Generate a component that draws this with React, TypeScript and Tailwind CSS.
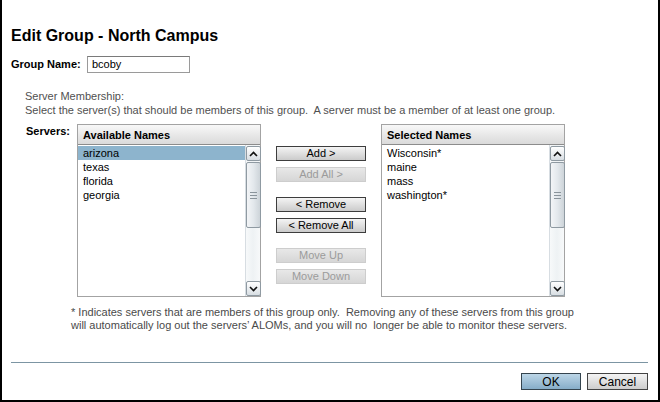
import React from "react";

const font = { fontFamily: '"Liberation Sans", Arial, sans-serif' };

function Chevron({ up }: { up: boolean }) {
  return (
    <svg width="9" height="6" viewBox="0 0 9 6" className="block">
      <polyline
        points={up ? "1,5 4.5,1.5 8,5" : "1,1 4.5,4.5 8,1"}
        fill="none"
        stroke="#111"
        strokeWidth="1.6"
      />
    </svg>
  );
}

function ScrollBar() {
  return (
    <div className="w-[15px] h-full flex flex-col border-l border-[#d7dde2] bg-gradient-to-r from-[#f7f9fa] via-[#eef2f4] to-[#f7f9fa]">
      <div className="mt-[1px] h-[15px] w-[15px] border border-[#8f9aa2] rounded-[2px] bg-gradient-to-b from-[#ffffff] to-[#d8dee3] flex items-center justify-center">
        <Chevron up />
      </div>
      <div className="mt-[1px] h-[66px] w-[15px] border border-[#8f9aa2] rounded-[2px] bg-gradient-to-r from-[#f3f5f7] via-[#e3e8ec] to-[#cdd4d9] flex flex-col items-center justify-center gap-[2px]">
        <div className="w-[7px] h-px bg-[#8a949b]" />
        <div className="w-[7px] h-px bg-[#8a949b]" />
        <div className="w-[7px] h-px bg-[#8a949b]" />
      </div>
      <div className="flex-1" />
      <div className="h-[15px] w-[15px] border border-[#8f9aa2] rounded-[2px] bg-gradient-to-b from-[#ffffff] to-[#d8dee3] flex items-center justify-center">
        <Chevron up={false} />
      </div>
    </div>
  );
}

function ListBox({
  title,
  items,
  selected,
}: {
  title: string;
  items: string[];
  selected?: number;
}) {
  return (
    <div className="w-[184px] h-[173px] border border-[#a3a3a3] flex flex-col bg-white">
      <div className="h-[20px] shrink-0 border-b border-[#8c8c8c] bg-gradient-to-b from-[#f8f8f8] to-[#dadada] pl-[5px] text-[11px] leading-[20px] font-bold text-black">
        {title}
      </div>
      <div className="flex-1 flex min-h-0">
        <div className="flex-1 pt-[1px]">
          {items.map((it, i) => (
            <div
              key={it}
              className={
                "h-[14px] pl-[5px] text-[11px] leading-[14px] text-black " +
                (i === selected ? "bg-[#8db4cd]" : "")
              }
            >
              {it}
            </div>
          ))}
        </div>
        <ScrollBar />
      </div>
    </div>
  );
}

function MidButton({ label, enabled }: { label: string; enabled: boolean }) {
  return (
    <div
      className={
        "w-[90px] h-[15px] border flex items-center justify-center text-[11px] leading-[13px] " +
        (enabled
          ? "border-[#3d3d3d] bg-gradient-to-b from-[#f4f4f4] to-[#cbcbcb] text-black"
          : "border-[#cdcdcd] bg-gradient-to-b from-[#e8e8e8] to-[#d6d6d6] text-[#9b9b9b]")
      }
    >
      {label}
    </div>
  );
}

export default function App() {
  return (
    <div
      className="w-[660px] h-[402px] border-l-2 border-r-2 border-b-2 border-black bg-white flex flex-col text-black"
      style={font}
    >
      <div className="pl-[9px] pt-[27px] text-[16px] leading-[18px] font-bold">
        Edit Group - North Campus
      </div>

      <div className="mt-[11px] pl-[9px] flex items-center h-[17px]">
        <div className="w-[76px] text-[11px] font-bold leading-[13px]">Group Name:</div>
        <div className="w-[103px] h-[17px] border border-[#9a9a9a] border-t-[#7a7a7a] pl-[4px] text-[11px] leading-[15px]">
          bcoby
        </div>
      </div>

      <div className="mt-[16px] pl-[23px] text-[11px] leading-[14px] text-[#505050]">
        <div>Server Membership:</div>
        <div className="whitespace-pre">
          Select the server(s) that should be members of this group.  A server must be a member of at least one group.
        </div>
      </div>

      <div className="mt-[7px] flex">
        <div className="pl-[24px] w-[75px] text-[11px] font-bold leading-[14px]">Servers:</div>
        <ListBox
          title="Available Names"
          items={["arizona", "texas", "florida", "georgia"]}
          selected={0}
        />
        <div className="ml-[15px] mr-[15px] pt-[22px] flex flex-col">
          <MidButton label="Add >" enabled />
          <div className="mt-[6px]">
            <MidButton label="Add All >" enabled={false} />
          </div>
          <div className="mt-[15px]">
            <MidButton label="< Remove" enabled />
          </div>
          <div className="mt-[6px]">
            <MidButton label="< Remove All" enabled />
          </div>
          <div className="mt-[15px]">
            <MidButton label="Move Up" enabled={false} />
          </div>
          <div className="mt-[6px]">
            <MidButton label="Move Down" enabled={false} />
          </div>
        </div>
        <ListBox
          title="Selected Names"
          items={["Wisconsin*", "maine", "mass", "washington*"]}
        />
      </div>

      <div className="mt-[9px] pl-[69px] text-[11px] leading-[13px] text-[#4a4a4a] whitespace-pre">
        <div>* Indicates servers that are members of this group only.  Removing any of these servers from this group</div>
        <div>will automatically log out the servers’ ALOMs, and you will no  longer be able to monitor these servers.</div>
      </div>

      <div className="flex-1" />

      <div className="ml-[9px] mr-[10px] h-px bg-[#7c95a3]" />

      <div className="mt-[10px] mb-[10px] mr-[10px] h-[17px] flex justify-end gap-[6px]">
        <div className="w-[60px] h-[17px] border border-[#34444e] bg-gradient-to-b from-[#bcd6e7] to-[#86adc8] flex items-center justify-center text-[12px] leading-[14px] text-black">
          OK
        </div>
        <div className="w-[61px] h-[17px] border border-[#444444] bg-gradient-to-b from-[#f4f4f4] to-[#cdcdcd] flex items-center justify-center text-[12px] leading-[14px] text-black">
          Cancel
        </div>
      </div>
    </div>
  );
}
